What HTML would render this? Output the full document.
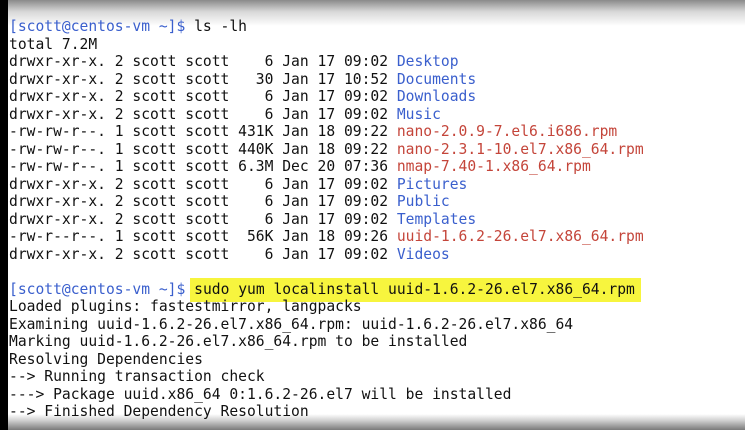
<!DOCTYPE html>
<html><head><style>
html,body{margin:0;padding:0;width:745px;height:430px;overflow:hidden;background:#fff}
.l{position:absolute;left:0;top:0;width:8px;height:430px;background:#000}
.t{position:absolute;left:0;top:0;width:745px;height:26px;background:linear-gradient(#8a8a8a,#d8d8d8 45%,#fff)}
.b{position:absolute;left:0;top:414px;width:745px;height:16px;background:linear-gradient(#fff,#d0d0d0 40%,#7a7a7a)}
pre{position:absolute;left:9px;top:18px;margin:0;font-family:"DejaVu Sans Mono","Liberation Mono",monospace;font-size:14.65px;line-height:17.5px;color:#111;z-index:2}
.p{color:#3a5fcd}.d{color:#3a5fcd}.r{color:#c4453a}
.h{background:#f7f53e;padding:3px 6px 4px 4px;margin-left:-4px}
</style></head><body>
<div class="t"></div><div class="b"></div>
<pre><span class="p">[scott@centos-vm ~]$</span> ls -lh
total 7.2M
drwxr-xr-x. 2 scott scott    6 Jan 17 09:02 <span class="d">Desktop</span>
drwxr-xr-x. 2 scott scott   30 Jan 17 10:52 <span class="d">Documents</span>
drwxr-xr-x. 2 scott scott    6 Jan 17 09:02 <span class="d">Downloads</span>
drwxr-xr-x. 2 scott scott    6 Jan 17 09:02 <span class="d">Music</span>
-rw-rw-r--. 1 scott scott 431K Jan 18 09:22 <span class="r">nano-2.0.9-7.el6.i686.rpm</span>
-rw-rw-r--. 1 scott scott 440K Jan 18 09:22 <span class="r">nano-2.3.1-10.el7.x86_64.rpm</span>
-rw-rw-r--. 1 scott scott 6.3M Dec 20 07:36 <span class="r">nmap-7.40-1.x86_64.rpm</span>
drwxr-xr-x. 2 scott scott    6 Jan 17 09:02 <span class="d">Pictures</span>
drwxr-xr-x. 2 scott scott    6 Jan 17 09:02 <span class="d">Public</span>
drwxr-xr-x. 2 scott scott    6 Jan 17 09:02 <span class="d">Templates</span>
-rw-r--r--. 1 scott scott  56K Jan 18 09:26 <span class="r">uuid-1.6.2-26.el7.x86_64.rpm</span>
drwxr-xr-x. 2 scott scott    6 Jan 17 09:02 <span class="d">Videos</span>

<span class="p">[scott@centos-vm ~]$</span> <span class="h">sudo yum localinstall uuid-1.6.2-26.el7.x86_64.rpm</span>
Loaded plugins: fastestmirror, langpacks
Examining uuid-1.6.2-26.el7.x86_64.rpm: uuid-1.6.2-26.el7.x86_64
Marking uuid-1.6.2-26.el7.x86_64.rpm to be installed
Resolving Dependencies
--> Running transaction check
---> Package uuid.x86_64 0:1.6.2-26.el7 will be installed
--> Finished Dependency Resolution</pre>
<div class="l"></div>
</body></html>
